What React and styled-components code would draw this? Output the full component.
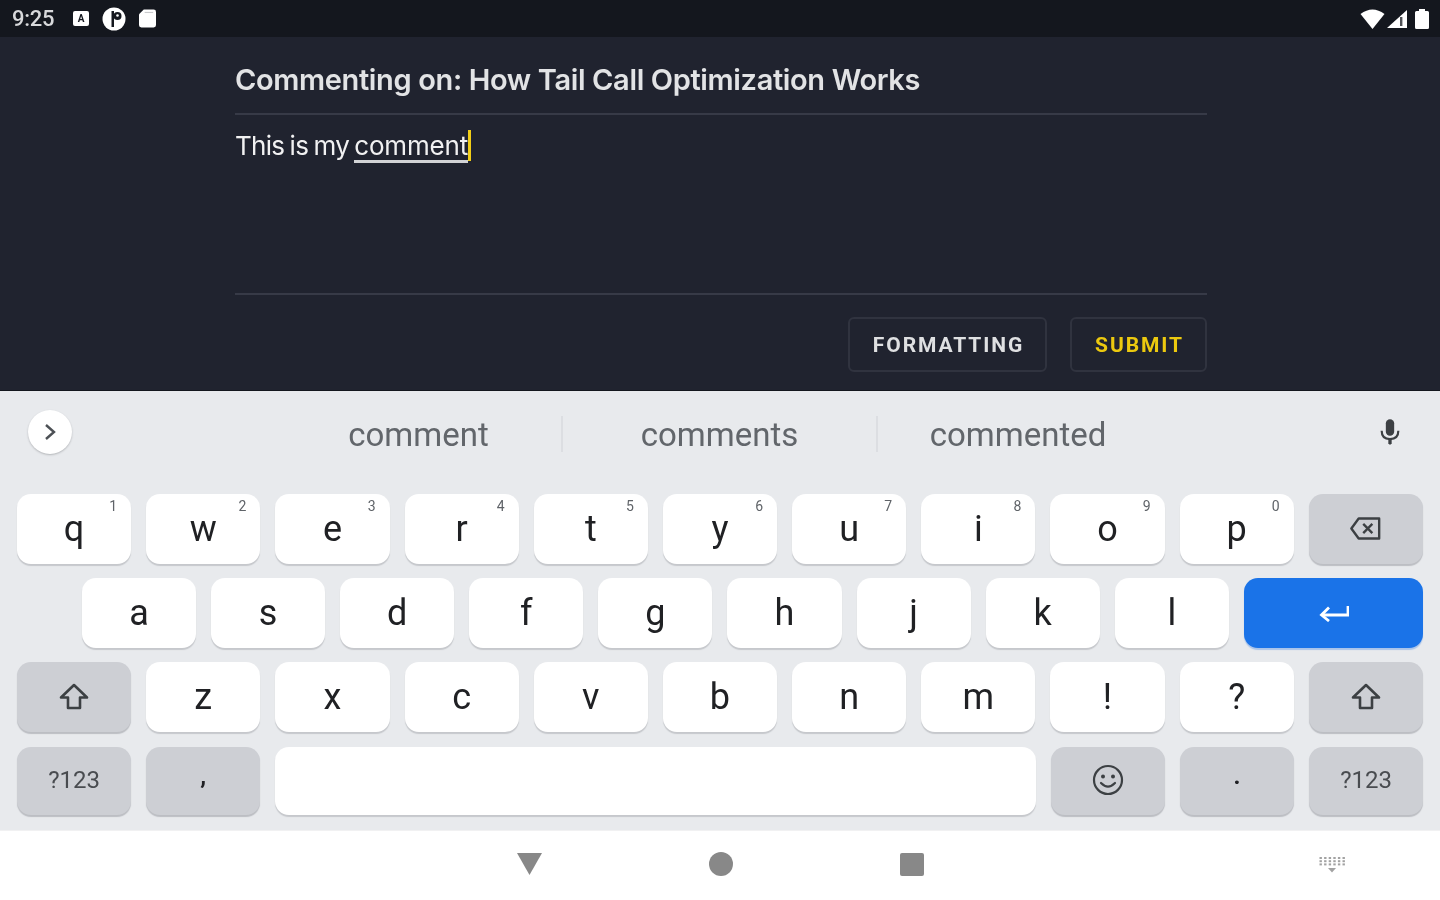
import styled, { createGlobalStyle } from 'styled-components';

const GlobalStyle = createGlobalStyle`
  html, body {
    margin: 0;
    padding: 0;
    background: #20232f;
  }
  body {
    font-family: Roboto, "Liberation Sans", sans-serif;
    overflow: hidden;
  }
`;

const Screen = styled.div`
  width: 1440px;
  height: 900px;
  display: flex;
  flex-direction: column;
  overflow: hidden;
  filter: blur(0.7px);
`;

/* status bar */
const StatusBar = styled.div`
  height: 37px;
  flex: none;
  background: #14171e;
  display: flex;
  align-items: center;
  justify-content: space-between;
  padding: 0 11px 0 12px;
`;

const StatusGroup = styled.div`
  display: flex;
  align-items: center;
  gap: ${(p) => p.$gap || 13}px;
`;

const Clock = styled.span`
  font-size: 22px;
  font-weight: 500;
  letter-spacing: -0.3px;
  color: #d8d9db;
  margin-right: 6px;
`;

const AppBadge = styled.span`
  width: 16px;
  height: 15px;
  background: #fff;
  border-radius: 2px;
  display: flex;
  align-items: center;
  justify-content: center;
  font-size: 10px;
  font-weight: 700;
  color: #14171e;
`;

const BatterySlot = styled.span`
  display: flex;
  margin-left: 6px;
`;

/* compose area */
const Compose = styled.div`
  height: 354px;
  flex: none;
  background: #20232f;
  border-bottom: 1px solid #14171e;
  box-sizing: border-box;
  padding: 0 233px 0 235px;
  display: flex;
  flex-direction: column;
`;

const Title = styled.h1`
  margin: 0;
  height: 78px;
  flex: none;
  box-sizing: border-box;
  border-bottom: 2px solid #373a47;
  padding-top: 24px;
  font-family: Inter, Roboto, sans-serif;
  font-size: 29px;
  line-height: 38px;
  font-weight: 600;
  letter-spacing: -0.36px;
  color: #e2e3e5;
  white-space: nowrap;
`;

const CommentBox = styled.div`
  height: 180px;
  flex: none;
  box-sizing: border-box;
  border-bottom: 2px solid #373a47;
  padding-top: 15px;
  font-family: Inter, Roboto, sans-serif;
  font-size: 26px;
  line-height: 32px;
  letter-spacing: -0.72px;
  word-spacing: -1.3px;
  color: #f1f1f2;
  white-space: pre;
`;

const Composing = styled.span`
  border-bottom: 3px solid #d2d3d6;
  display: inline-block;
  line-height: 29px;
  letter-spacing: -0.2px;
`;

const Caret = styled.span`
  display: inline-block;
  width: 3px;
  height: 31px;
  background: #f2ce17;
  vertical-align: -6px;
`;

const Actions = styled.div`
  display: flex;
  justify-content: flex-end;
  gap: 23px;
  padding-top: 22px;
`;

const ActionButton = styled.button`
  width: ${(p) => p.$width}px;
  height: 55px;
  box-sizing: border-box;
  background: transparent;
  border: 2px solid #30333f;
  border-radius: 6px;
  font-family: Roboto, sans-serif;
  font-size: 21px;
  font-weight: 700;
  letter-spacing: 1.9px;
  padding: 0 0 0 2px;
  color: ${(p) => (p.$accent ? '#ecc90f' : '#dfe0e2')};
`;

/* keyboard */
const Keyboard = styled.div`
  height: 439px;
  flex: none;
  background: #e8eaed;
  box-sizing: border-box;
  padding: 0 17px;
  display: flex;
  flex-direction: column;
`;

const SuggestionStrip = styled.div`
  height: 103px;
  flex: none;
  display: flex;
  align-items: flex-start;
  margin: 0 -17px;
  padding: 19px 38px 0 28px;
  box-sizing: border-box;
`;

const ExpandButton = styled.div`
  width: 44px;
  height: 44px;
  flex: none;
  border-radius: 50%;
  background: #fff;
  box-shadow: 0 1px 2px rgba(60, 64, 67, 0.3);
  display: flex;
  align-items: center;
  justify-content: center;
`;

const Suggestions = styled.div`
  flex: 1;
  display: flex;
  padding-left: 204px;
`;

const Suggestion = styled.div`
  width: ${(p) => p.$width}px;
  height: 36px;
  margin-top: 6px;
  box-sizing: border-box;
  text-align: center;
  font-size: 33px;
  line-height: 38px;
  color: #62666b;
  border-right: ${(p) => (p.$divider ? '2px solid #dcdee2' : 'none')};
`;

const MicSlot = styled.div`
  width: 24px;
  flex: none;
  padding-top: 8px;
  display: flex;
  justify-content: center;
`;

const KeyRows = styled.div`
  display: flex;
  flex-direction: column;
  gap: 14.2px;
`;

const KeyRow = styled.div`
  display: flex;
  gap: 15px;
  padding-left: ${(p) => p.$indent || 0}px;
`;

const Key = styled.div`
  position: relative;
  width: ${(p) => p.$width || 114.18}px;
  height: ${(p) => p.$height || 70}px;
  flex: none;
  border-radius: 14px;
  background: ${(p) => (p.$tone === 'fn' ? '#cdcfd4' : p.$tone === 'enter' ? '#1a73e8' : '#fff')};
  box-shadow: 0 2px 1px ${(p) => (p.$tone === 'fn' ? '#bcbec3' : p.$tone === 'enter' ? '#a9c4ea' : '#c6c8cc')};
  display: flex;
  align-items: center;
  justify-content: center;
  font-size: ${(p) => p.$size || 36}px;
  font-weight: ${(p) => (p.$mark ? 700 : 400)};
  color: ${(p) => (p.$small ? '#494c50' : '#202124')};
  padding-bottom: ${(p) => (p.$mark ? 10 : 1)}px;
  box-sizing: border-box;
`;

const Hint = styled.span`
  position: absolute;
  top: 4px;
  right: 14px;
  font-size: 14px;
  line-height: 16px;
  color: #5f6368;
`;

/* navigation bar */
const NavBar = styled.div`
  flex: 1;
  background: #fff;
  border-top: 1px solid #f1f1f2;
  box-sizing: border-box;
  display: grid;
  grid-template-columns: 1fr auto 1fr;
  align-items: center;
  padding-bottom: 3px;
`;

const NavCenter = styled.div`
  display: flex;
  align-items: center;
  gap: 167px;
`;

const NavCircle = styled.div`
  width: 24px;
  height: 24px;
  border-radius: 50%;
  background: #888;
`;

const NavSquare = styled.div`
  width: 24px;
  height: 23px;
  border-radius: 2px;
  background: #888;
`;

const NavEnd = styled.div`
  display: flex;
  justify-content: flex-end;
  padding: 1px 95px 0 0;
`;

/* icons */
const ShiftIcon = () => (
  <svg width="30" height="30" viewBox="0 0 30 30" fill="none" stroke="#3c4043" strokeWidth="2.6" strokeLinejoin="round">
    <path d="M15 3 L28 15.5 H21 V26 H9 V15.5 H2 Z" />
  </svg>
);

const BackspaceIcon = () => (
  <svg width="31" height="25" viewBox="0 0 34 26" fill="none" stroke="#3c4043" strokeWidth="2.6" strokeLinejoin="round">
    <path d="M9.5 2 H32 V24 H9.5 L1.5 13 Z" />
    <path d="M14.5 8 L24.5 18 M24.5 8 L14.5 18" />
  </svg>
);

const EnterIcon = () => (
  <svg width="30" height="18" viewBox="0 0 30 18" fill="none" stroke="#fff" strokeWidth="2.8">
    <path d="M29 2 V11 H3" />
    <path d="M10 3.5 L2.5 11 L10 17" />
  </svg>
);

const EmojiIcon = () => (
  <svg width="32" height="32" viewBox="0 0 32 32" fill="none" stroke="#3c4043" strokeWidth="2.2">
    <circle cx="16" cy="16" r="14" />
    <circle cx="11" cy="12.5" r="2" fill="#3c4043" stroke="none" />
    <circle cx="21" cy="12.5" r="2" fill="#3c4043" stroke="none" />
    <path d="M9 19 Q16 26 23 19" strokeLinecap="round" />
  </svg>
);

const MicIcon = () => (
  <svg width="20" height="29" viewBox="0 0 24 32" fill="#3c4043">
    <rect x="7" y="0" width="10" height="20" rx="5" />
    <path d="M2 14 C2 21 6 24 12 24 C18 24 22 21 22 14" fill="none" stroke="#3c4043" strokeWidth="2.6" />
    <path d="M10 23 H14 V29 L12 31 L10 29 Z" />
  </svg>
);

const ChevronIcon = () => (
  <svg width="12" height="18" viewBox="0 0 12 18" fill="none" stroke="#4c5055" strokeWidth="2.4">
    <path d="M2 2 L10 9 L2 16" />
  </svg>
);

const AppCircleIcon = () => (
  <svg width="24" height="24" viewBox="0 0 24 24">
    <circle cx="12" cy="12" r="11.5" fill="#fff" />
    <path d="M9.5 4 H12 V20 H9.5 Z" fill="#14171e" />
    <circle cx="15.5" cy="9" r="4" fill="#14171e" />
    <circle cx="15.5" cy="8.5" r="1.3" fill="#fff" />
  </svg>
);

const SdCardIcon = () => (
  <svg width="17" height="19" viewBox="0 0 18 19">
    <path d="M5 0 H15.5 Q18 0 18 2.5 V16.5 Q18 19 15.5 19 H2.5 Q0 19 0 16.5 V5 Z" fill="#fff" />
    <rect x="6" y="2.5" width="9" height="1.2" fill="#c9cacc" />
  </svg>
);

const WifiIcon = () => (
  <svg width="25" height="21" viewBox="0 0 25 21">
    <path d="M0.5 6 Q12.5 -3 24.5 6 L12.5 21 Z" fill="#fff" />
  </svg>
);

const SignalIcon = () => (
  <svg width="20" height="18" viewBox="0 0 20 18">
    <path d="M20 0 V18 H0 Z" fill="#fff" />
    <rect x="13" y="7" width="2.4" height="9" fill="#14171e" fillOpacity="0.75" />
  </svg>
);

const BatteryIcon = () => (
  <svg width="14" height="20" viewBox="0 0 14 20">
    <path d="M4 0 H10 V2 H12.5 Q14 2 14 3.5 V18.5 Q14 20 12.5 20 H1.5 Q0 20 0 18.5 V3.5 Q0 2 1.5 2 H4 Z" fill="#fff" />
  </svg>
);

const BackTriangle = () => (
  <svg width="25" height="22" viewBox="0 0 25 22">
    <path d="M0 0 H25 L12.5 22 Z" fill="#888" />
  </svg>
);

const HideKeyboardIcon = () => (
  <svg width="26" height="16" viewBox="0 0 26 16" fill="#a2a2a2">
    {[0, 1, 2].map((row) =>
      [0, 1, 2, 3, 4, 5].map((col) => (
        <rect key={`${row}-${col}`} x={col * 4.6 + 0.5} y={row * 3.2} width="2.4" height="2" />
      ))
    )}
    <path d="M9 11 L13 15.5 L17 11 Z" />
  </svg>
);

const TOP_ROW = [['q', '1'], ['w', '2'], ['e', '3'], ['r', '4'], ['t', '5'], ['y', '6'], ['u', '7'], ['i', '8'], ['o', '9'], ['p', '0']];
const HOME_ROW = ['a', 's', 'd', 'f', 'g', 'h', 'j', 'k', 'l'];
const BOTTOM_ROW = ['z', 'x', 'c', 'v', 'b', 'n', 'm', '!', '?'];

export default function App() {
  return (
    <>
      <GlobalStyle />
      <Screen>
        <StatusBar>
          <StatusGroup>
            <Clock>9:25</Clock>
            <AppBadge>A</AppBadge>
            <AppCircleIcon />
            <SdCardIcon />
          </StatusGroup>
          <StatusGroup $gap={2}>
            <WifiIcon />
            <SignalIcon />
            <BatterySlot><BatteryIcon /></BatterySlot>
          </StatusGroup>
        </StatusBar>

        <Compose>
          <Title>Commenting on: How Tail Call Optimization Works</Title>
          <CommentBox>
            This is my <Composing>comment</Composing>
            <Caret />
          </CommentBox>
          <Actions>
            <ActionButton $width={199}>FORMATTING</ActionButton>
            <ActionButton $width={137} $accent>SUBMIT</ActionButton>
          </Actions>
        </Compose>

        <Keyboard>
          <SuggestionStrip>
            <ExpandButton><ChevronIcon /></ExpandButton>
            <Suggestions>
              <Suggestion $width={287} $divider>comment</Suggestion>
              <Suggestion $width={315} $divider>comments</Suggestion>
              <Suggestion $width={280}>commented</Suggestion>
            </Suggestions>
            <MicSlot><MicIcon /></MicSlot>
          </SuggestionStrip>

          <KeyRows>
            <KeyRow>
              {TOP_ROW.map(([letter, digit]) => (
                <Key key={letter}>
                  {letter}
                  <Hint>{digit}</Hint>
                </Key>
              ))}
              <Key $tone="fn"><BackspaceIcon /></Key>
            </KeyRow>
            <KeyRow $indent={65}>
              {HOME_ROW.map((letter) => (
                <Key key={letter} $width={114.1}>{letter}</Key>
              ))}
              <Key $tone="enter" $width={179.5}><EnterIcon /></Key>
            </KeyRow>
            <KeyRow>
              <Key $tone="fn"><ShiftIcon /></Key>
              {BOTTOM_ROW.map((letter) => (
                <Key key={letter}>{letter}</Key>
              ))}
              <Key $tone="fn"><ShiftIcon /></Key>
            </KeyRow>
            <KeyRow>
              <Key $tone="fn" $height={68} $size={24} $small>?123</Key>
              <Key $tone="fn" $height={68} $size={24} $mark>,</Key>
              <Key $width={760.4} $height={68} />
              <Key $tone="fn" $height={68}><EmojiIcon /></Key>
              <Key $tone="fn" $height={68} $size={24} $mark>.</Key>
              <Key $tone="fn" $height={68} $size={24} $small>?123</Key>
            </KeyRow>
          </KeyRows>
        </Keyboard>

        <NavBar>
          <span />
          <NavCenter>
            <BackTriangle />
            <NavCircle />
            <NavSquare />
          </NavCenter>
          <NavEnd><HideKeyboardIcon /></NavEnd>
        </NavBar>
      </Screen>
    </>
  );
}
